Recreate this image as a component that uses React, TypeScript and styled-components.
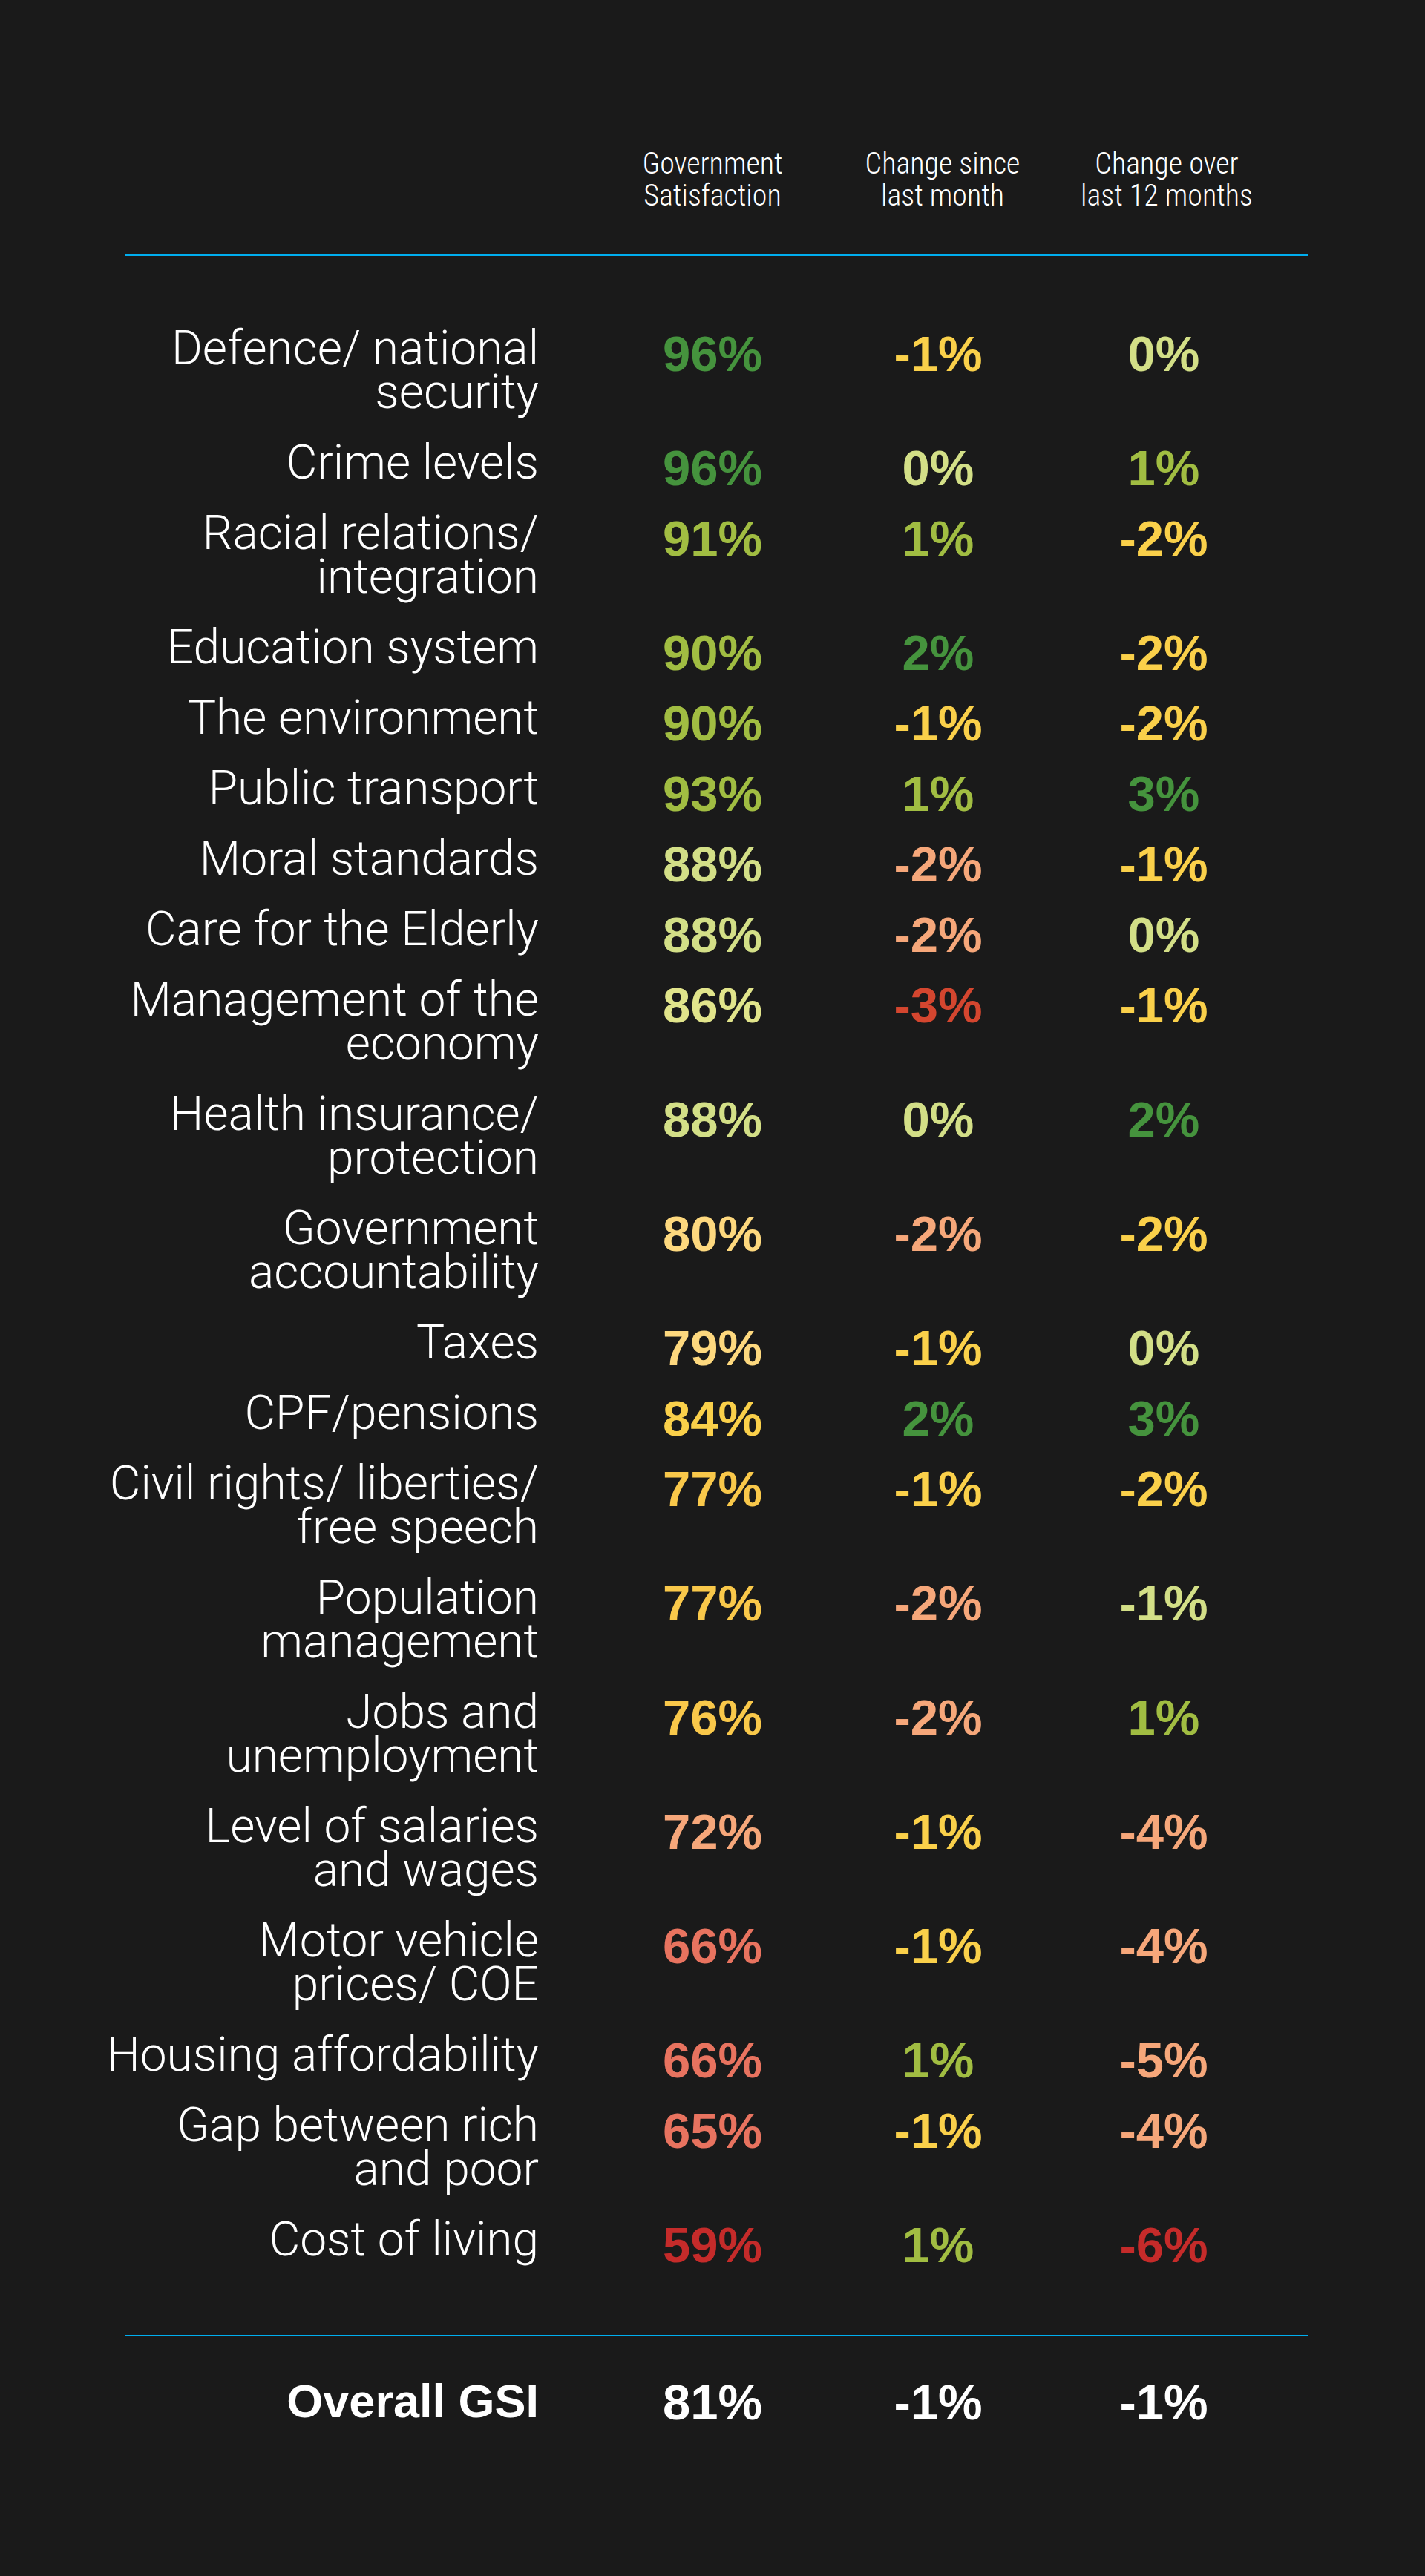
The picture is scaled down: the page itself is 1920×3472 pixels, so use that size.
import React from "react";
import styled, { createGlobalStyle } from "styled-components";

const GlobalStyle = createGlobalStyle`
  html, body {
    margin: 0;
    padding: 0;
    background: #1a1a1a;
  }
  body {
    font-family: "Liberation Sans", Arial, sans-serif;
    color: #ffffff;
  }
`;

const C = {
  G: "#45933d",
  YG: "#a1bd42",
  LG: "#d3df87",
  LY: "#e1e48b",
  PY: "#fdd87e",
  Y: "#fad04a",
  GO: "#f9c84a",
  P: "#f6a77a",
  S: "#e8735f",
  R3: "#d4462f",
  R: "#c52b2a",
  W: "#ffffff",
};

type Cell = [string, string];
type Row = { label: string[]; sat: Cell; month: Cell; year: Cell };

const rows: Row[] = [
  { label: ["Defence/ national", "security"], sat: ["96%", C.G], month: ["-1%", C.Y], year: ["0%", C.LG] },
  { label: ["Crime levels"], sat: ["96%", C.G], month: ["0%", C.LG], year: ["1%", C.YG] },
  { label: ["Racial relations/", "integration"], sat: ["91%", C.YG], month: ["1%", C.YG], year: ["-2%", C.Y] },
  { label: ["Education system"], sat: ["90%", C.YG], month: ["2%", C.G], year: ["-2%", C.Y] },
  { label: ["The environment"], sat: ["90%", C.YG], month: ["-1%", C.Y], year: ["-2%", C.Y] },
  { label: ["Public transport"], sat: ["93%", C.YG], month: ["1%", C.YG], year: ["3%", C.G] },
  { label: ["Moral standards"], sat: ["88%", C.LG], month: ["-2%", C.P], year: ["-1%", C.Y] },
  { label: ["Care for the Elderly"], sat: ["88%", C.LG], month: ["-2%", C.P], year: ["0%", C.LG] },
  { label: ["Management of the", "economy"], sat: ["86%", C.LY], month: ["-3%", C.R3], year: ["-1%", C.Y] },
  { label: ["Health insurance/", "protection"], sat: ["88%", C.LG], month: ["0%", C.LG], year: ["2%", C.G] },
  { label: ["Government", "accountability"], sat: ["80%", C.PY], month: ["-2%", C.P], year: ["-2%", C.Y] },
  { label: ["Taxes"], sat: ["79%", C.PY], month: ["-1%", C.Y], year: ["0%", C.LG] },
  { label: ["CPF/pensions"], sat: ["84%", C.Y], month: ["2%", C.G], year: ["3%", C.G] },
  { label: ["Civil rights/ liberties/", "free speech"], sat: ["77%", C.GO], month: ["-1%", C.Y], year: ["-2%", C.Y] },
  { label: ["Population", "management"], sat: ["77%", C.GO], month: ["-2%", C.P], year: ["-1%", C.LG] },
  { label: ["Jobs and", "unemployment"], sat: ["76%", C.GO], month: ["-2%", C.P], year: ["1%", C.YG] },
  { label: ["Level of salaries", "and wages"], sat: ["72%", C.P], month: ["-1%", C.Y], year: ["-4%", C.P] },
  { label: ["Motor vehicle", "prices/ COE"], sat: ["66%", C.S], month: ["-1%", C.Y], year: ["-4%", C.P] },
  { label: ["Housing affordability"], sat: ["66%", C.S], month: ["1%", C.YG], year: ["-5%", C.P] },
  { label: ["Gap between rich", "and poor"], sat: ["65%", C.S], month: ["-1%", C.Y], year: ["-4%", C.P] },
  { label: ["Cost of living"], sat: ["59%", C.R], month: ["1%", C.YG], year: ["-6%", C.R] },
];

const Page = styled.main`
  width: 1920px;
  min-height: 3472px;
  box-sizing: border-box;
  background: #1a1a1a;
  padding-top: 199px;
`;

const Grid = styled.div`
  display: grid;
  grid-template-columns: 808px repeat(3, 304px);
  align-items: start;
`;

const HeaderRow = styled(Grid)`
  margin-bottom: 58px;
`;

const HeadCell = styled.div<{ $shift?: number }>`
  display: flex;
  flex-direction: column;
  align-items: center;
  padding-left: ${(p) => p.$shift ?? 0}px;
  font-family: "Liberation Sans Narrow", "Roboto Condensed", "DejaVu Sans Condensed", "Roboto", sans-serif;
  font-stretch: condensed;
  font-weight: 300;
  font-size: 40px;
  line-height: 43px;
  color: #ffffff;
  white-space: nowrap;
`;

const Rule = styled.hr`
  width: 1594px;
  height: 2px;
  margin: 0 0 0 169px;
  border: 0;
  background: #00aeef;
`;

const TopRule = styled(Rule)`
  margin-bottom: 95px;
`;

const BottomRule = styled(Rule)`
  margin-top: 99px;
  margin-bottom: 58px;
`;

const List = styled.div`
  display: flex;
  flex-direction: column;
  gap: 36px;
`;

const Label = styled.div<{ $bold?: boolean }>`
  display: flex;
  flex-direction: column;
  align-items: flex-end;
  padding-right: 82px;
  font-family: ${(p) => (p.$bold ? `"Liberation Sans", Arial, sans-serif` : `"Roboto", "Liberation Sans", sans-serif`)};
  font-weight: ${(p) => (p.$bold ? 700 : 300)};
  font-size: ${(p) => (p.$bold ? 63 : 64)}px;
  line-height: 59px;
  color: #ffffff;
  white-space: nowrap;

  & > span {
    height: 59px;
  }
`;

/* The value text sits a few pixels below the label's first line:
   padding moves it down while the shorter line box keeps the cell 59px tall. */
const Value = styled.div<{ $color: string; $offset?: number }>`
  display: flex;
  justify-content: center;
  padding-top: ${(p) => 2 * (p.$offset ?? 7)}px;
  height: 59px;
  box-sizing: border-box;
  font-family: "Liberation Sans", Arial, sans-serif;
  font-weight: 700;
  font-size: 67px;
  line-height: ${(p) => 59 - 2 * (p.$offset ?? 7)}px;
  color: ${(p) => p.$color};
  white-space: nowrap;
`;

const Footer = styled(Grid)``;

export default function App() {
  return (
    <>
      <GlobalStyle />
      <Page>
        <HeaderRow>
          <div />
          <HeadCell>
            <span>Government</span>
            <span>Satisfaction</span>
          </HeadCell>
          <HeadCell $shift={12}>
            <span>Change since</span>
            <span>last month</span>
          </HeadCell>
          <HeadCell $shift={8}>
            <span>Change over</span>
            <span>last 12 months</span>
          </HeadCell>
        </HeaderRow>
        <TopRule />
        <List>
          {rows.map((r) => (
            <Grid key={r.label.join(" ")}>
              <Label>
                {r.label.map((l) => (
                  <span key={l}>{l}</span>
                ))}
              </Label>
              <Value $color={r.sat[1]}>{r.sat[0]}</Value>
              <Value $color={r.month[1]}>{r.month[0]}</Value>
              <Value $color={r.year[1]}>{r.year[0]}</Value>
            </Grid>
          ))}
        </List>
        <BottomRule />
        <Footer>
          <Label $bold>
            <span>Overall GSI</span>
          </Label>
          <Value $color={C.W} $offset={1}>81%</Value>
          <Value $color={C.W} $offset={1}>-1%</Value>
          <Value $color={C.W} $offset={1}>-1%</Value>
        </Footer>
      </Page>
    </>
  );
}
